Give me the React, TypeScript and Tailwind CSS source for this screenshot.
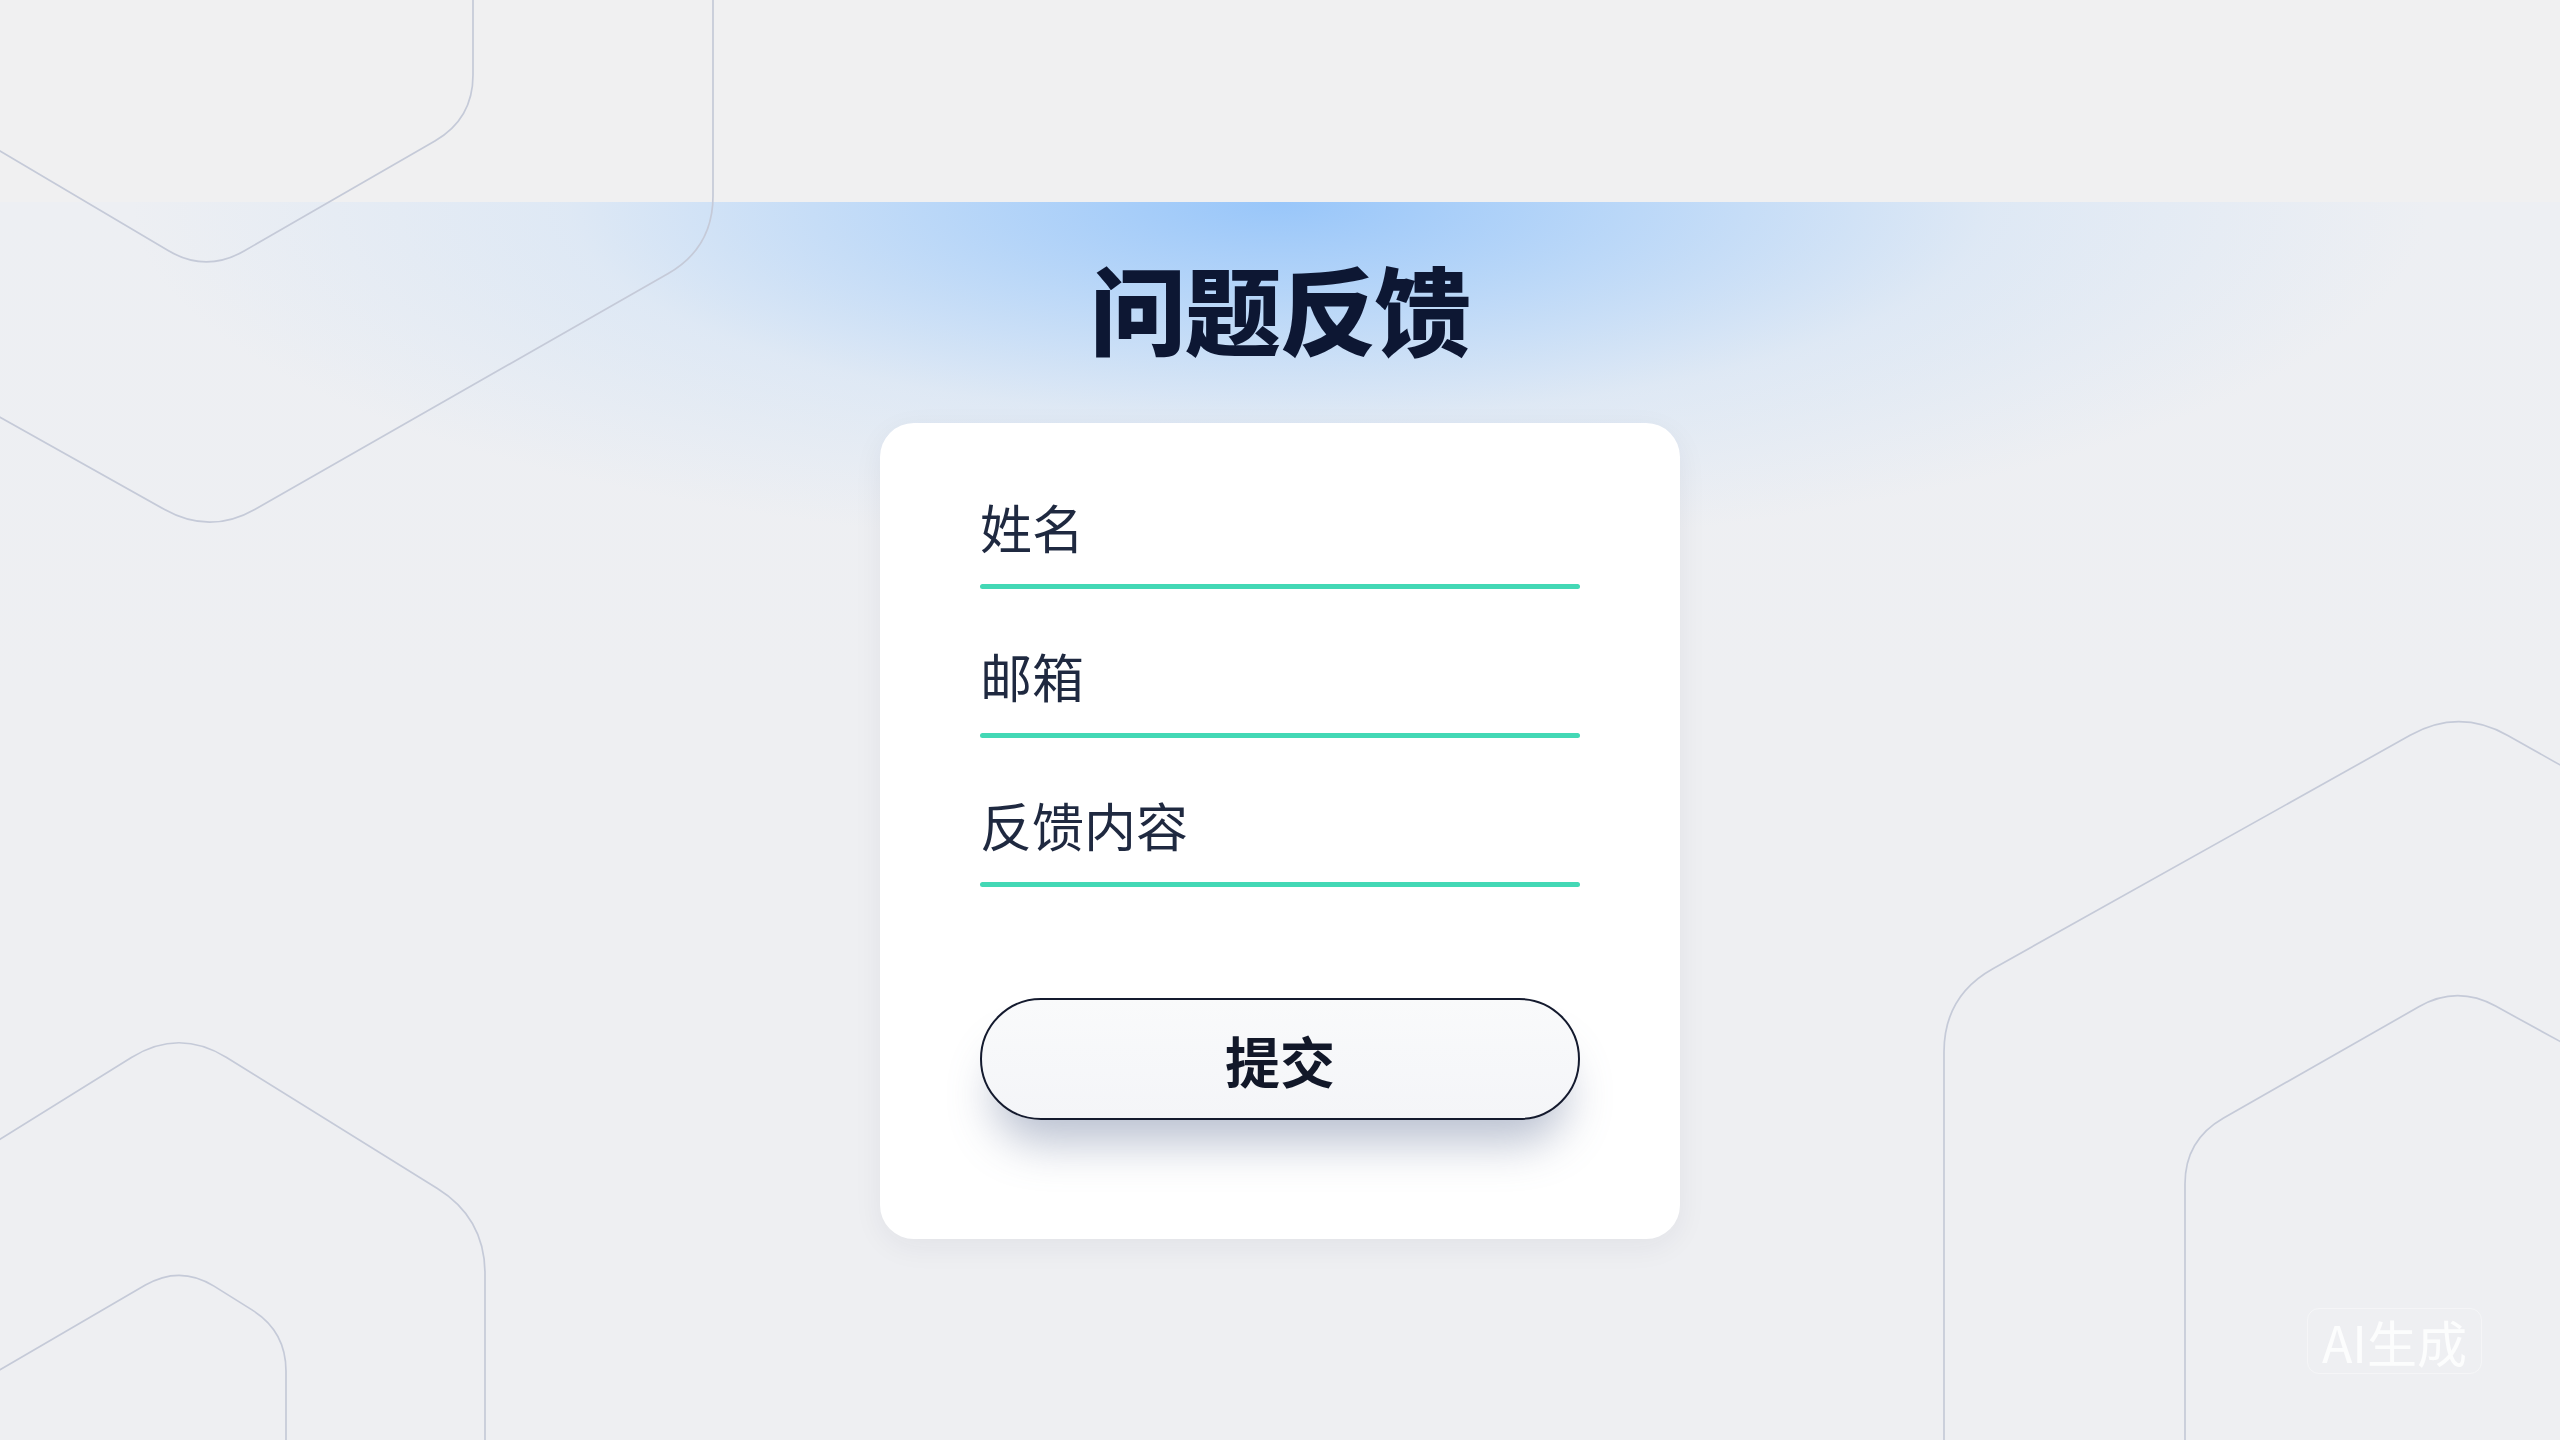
import React from "react"

type Pt = [number, number]

// closed outline through the given corners, every corner rounded by d
const roundedPath = (v: Pt[], d: number) => {
    const n = v.length
    const step = (p: Pt, q: Pt): Pt => {
        const dx = q[0] - p[0]
        const dy = q[1] - p[1]
        const len = Math.hypot(dx, dy)
        const k = Math.min(d, len / 2) / len
        return [p[0] + dx * k, p[1] + dy * k]
    }
    const f = (p: Pt) => `${p[0].toFixed(1)} ${p[1].toFixed(1)}`
    let path = ""
    v.forEach((p, i) => {
        const a = step(p, v[(i + n - 1) % n])
        const b = step(p, v[(i + 1) % n])
        path += `${i === 0 ? "M" : "L"}${f(a)} Q${f(p)} ${f(b)} `
    })
    return path + "Z"
}

const HEXES: { pts: Pt[]; d: number }[] = [
    // top left, small
    { pts: [[206, -340], [473, -190], [473, 119], [206, 273], [-61, 115], [-61, -190]], d: 44 },
    // top left, large
    { pts: [[210, -620], [713, -330], [713, 248], [210, 535], [-300, 249], [-300, -330]], d: 52 },
    // bottom left, large
    { pts: [[179, 1028], [485, 1218], [485, 1700], [179, 1900], [-127, 1700], [-127, 1218]], d: 56 },
    // bottom left, small
    { pts: [[180, 1265], [286, 1331], [286, 1800], [180, 1900], [-126, 1800], [-126, 1443]], d: 40 },
    // bottom right, large
    { pts: [[2459, 708], [2960, 990], [2960, 1700], [2459, 1900], [1944, 1700], [1944, 996]], d: 56 },
    // bottom right, small
    { pts: [[2457, 985], [2740, 1140], [2740, 1700], [2457, 1900], [2185, 1700], [2185, 1140]], d: 44 },
]

const Field = ({ label }: { label: string }) => (
    <div className="flex flex-col">
        <span className="h-[52px] text-[52px] leading-[52px] text-[#1f2940] font-normal">{label}</span>
        <div className="mt-[31px] h-[5px] w-full rounded-full bg-[#43d8b5]"></div>
    </div>
)

export default function App() {
    return (
        <div className="relative w-screen h-screen overflow-hidden bg-[#f0f0f1] font-['Noto_Sans_CJK_SC','Noto_Sans',sans-serif]">

            {/* blue glow behind the title, hard top edge */}
            <div className="absolute left-0 top-[202px] w-full h-[1238px] bg-[radial-gradient(ellipse_1150px_350px_at_50%_0%,rgba(148,196,250,0.95)_0%,rgba(166,206,250,0.72)_30%,rgba(196,221,248,0.36)_62%,rgba(220,230,244,0)_100%),linear-gradient(180deg,#edeff3_0%,#eeeff2_40%,#eeeff2_100%)]"></div>

            <svg className="absolute inset-0" width="2560" height="1440" viewBox="0 0 2560 1440" fill="none">
                {HEXES.map((h, i) => (
                    <path key={i} d={roundedPath(h.pts, h.d)} stroke="#c5cad8" strokeWidth="1.7" />
                ))}
            </svg>

            <div className="relative z-10 flex flex-col items-center pt-[259px]">
                <h1 className="text-[96px] leading-[96px] font-black text-[#0d1733] tracking-[-1px]">问题反馈</h1>

                <div className="mt-[68px] w-[800px] rounded-[34px] bg-white px-[100px] pt-[78px] pb-[119px] shadow-[0_8px_30px_rgba(30,40,70,0.06)]">
                    <div className="flex flex-col gap-[61px]">
                        <Field label="姓名" />
                        <Field label="邮箱" />
                        <Field label="反馈内容" />
                    </div>

                    <button className="mt-[111px] w-full h-[122px] rounded-full border-[2.5px] border-[#141a2e] bg-[linear-gradient(180deg,#f9fafb_0%,#f4f5f8_100%)] text-[55px] font-bold text-[#121829] shadow-[0_36px_46px_-14px_rgba(100,115,150,0.45)]">
                        提交
                    </button>
                </div>
            </div>

            <div className="absolute right-[78px] bottom-[66px] rounded-[12px] border border-white/40 px-[14px] text-[50px] leading-[64px] text-white/85">
                AI生成
            </div>
        </div>
    )
}
